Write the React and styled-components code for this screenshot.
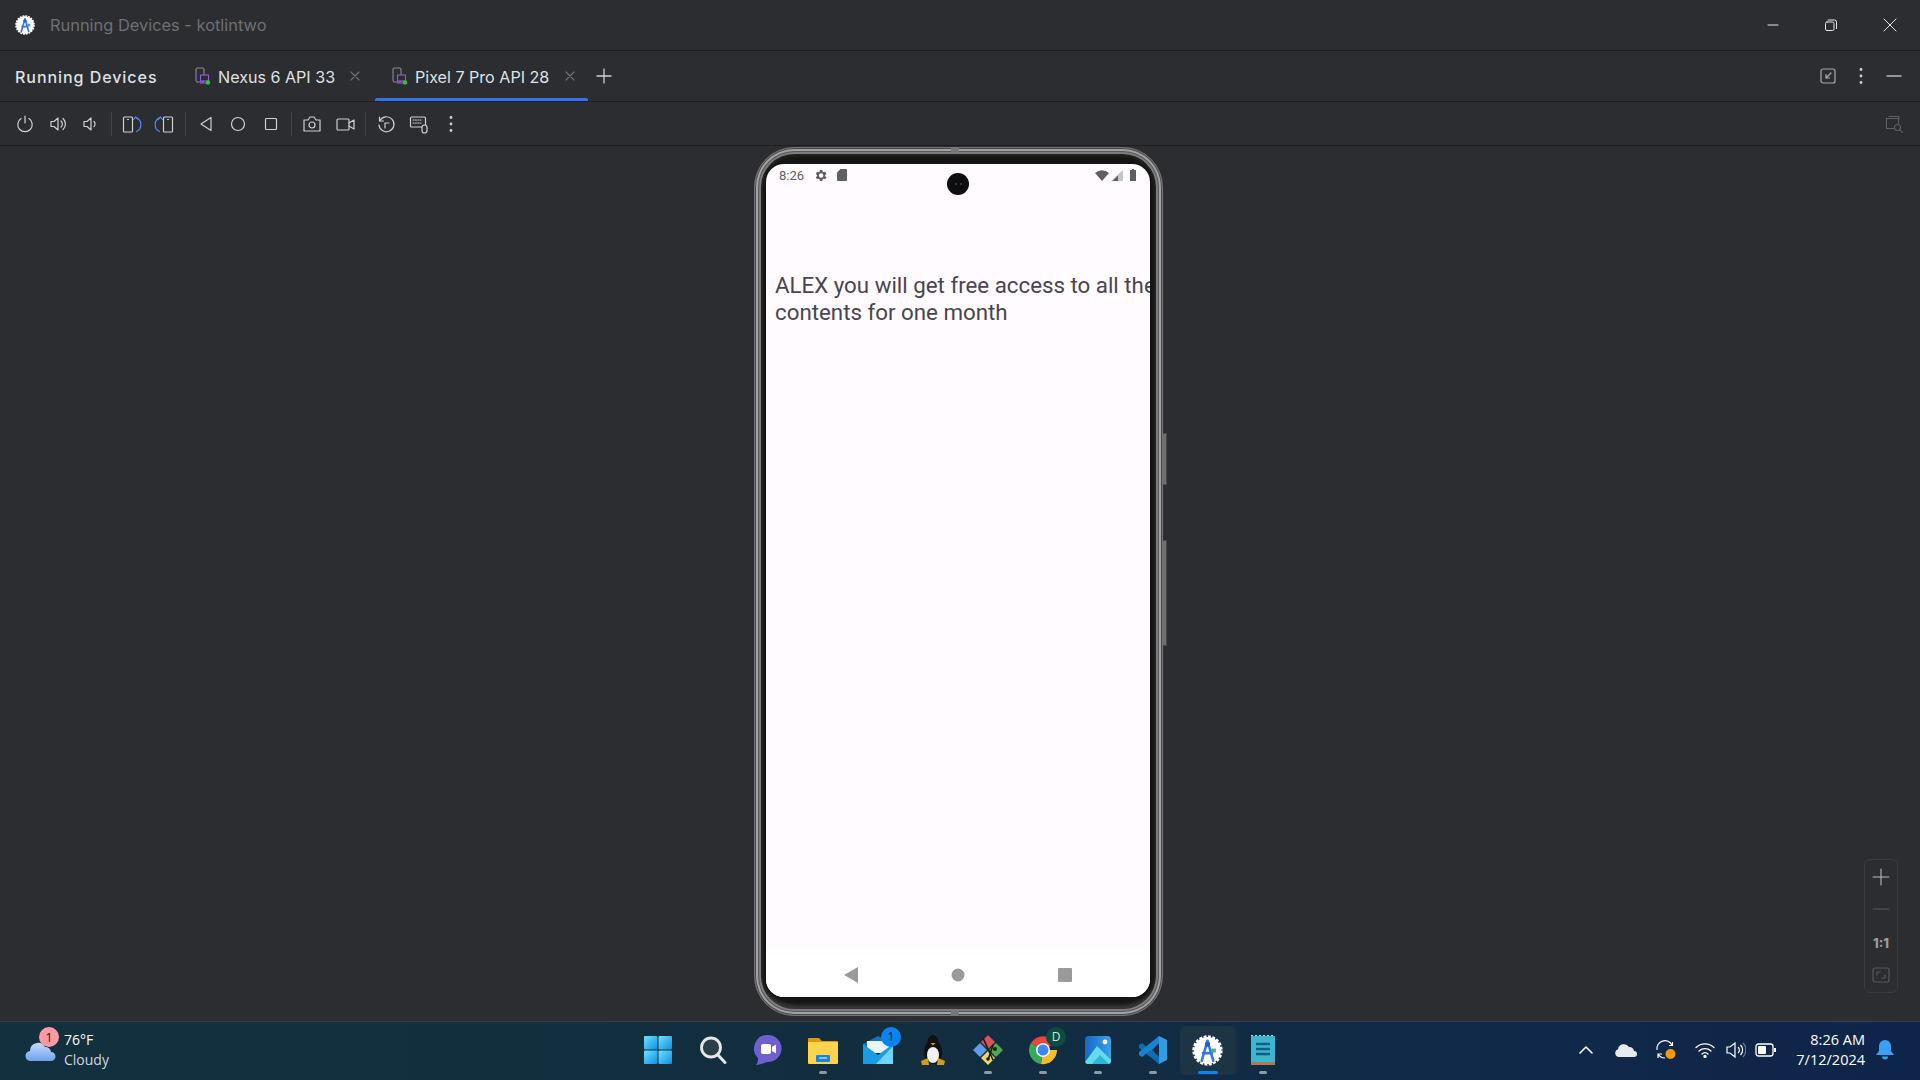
import React from "react";
import styled, { createGlobalStyle } from "styled-components";

const GlobalStyle = createGlobalStyle`
  html, body { margin: 0; padding: 0; background: #2b2d30; overflow: hidden; }
  * { box-sizing: border-box; }
`;

const Window = styled.div`
  width: 1920px;
  height: 1080px;
  display: flex;
  flex-direction: column;
  overflow: hidden;
  background: #2b2d30;
  font-family: Inter, "Liberation Sans", sans-serif;
  color: #dfe1e5;
`;

const TitleBar = styled.div`
  height: 51px;
  flex: none;
  display: flex;
  align-items: center;
  padding-left: 15px;
  border-bottom: 1px solid #1e1f22;
`;

const TitleText = styled.span`
  margin-left: 15px;
  font-size: 16.4px;
  color: #6d7075;
  padding-bottom: 1px;
`;

const WinButtons = styled.div`
  margin-left: auto;
  display: flex;
  align-items: center;
  padding-right: 1px;
`;

const WinButton = styled.div`
  width: 58.5px;
  height: 50px;
  display: flex;
  align-items: center;
  justify-content: center;
`;

const TabRow = styled.div`
  height: 51px;
  flex: none;
  display: flex;
  align-items: center;
  padding-left: 15px;
  border-bottom: 1px solid #1e1f22;
`;

const ToolTitle = styled.span`
  width: 180px;
  padding-top: 1px;
  font-size: 16px;
  font-weight: 500;
  letter-spacing: 0.95px;
  color: #dfe1e5;
`;

const Tab = styled.div`
  position: relative;
  height: 50px;
  display: flex;
  align-items: center;
  padding-left: ${(p) => (p.$active ? "17px" : "0")};
  width: ${(p) => (p.$active ? "213px" : "180px")};
  font-size: 16.1px;
  color: #dfe1e5;
  &::after {
    content: "";
    display: ${(p) => (p.$active ? "block" : "none")};
    position: absolute;
    left: 0;
    right: 0;
    bottom: 0;
    height: 3px;
    border-radius: 2px 2px 0 0;
    background: #3574f0;
  }
`;

const TabLabel = styled.span`
  margin-left: 7px;
  padding-top: 1px;
  white-space: nowrap;
`;

const TabClose = styled.span`
  margin-left: ${(p) => (p.$active ? "15px" : "14px")};
  display: flex;
`;

const RowEnd = styled.div`
  margin-left: auto;
  display: flex;
  align-items: center;
  gap: ${(p) => p.$gap || 13}px;
  padding-right: ${(p) => p.$right ?? 16}px;
`;

const Toolbar = styled.div`
  height: 44px;
  flex: none;
  display: flex;
  align-items: center;
  padding: 0 16px 0 9px;
  border-bottom: 1px solid #1e1f22;
`;

const ToolButton = styled.div`
  width: 32.5px;
  height: 32px;
  display: flex;
  align-items: center;
  justify-content: center;
`;

const ToolSeparator = styled.div`
  width: 1px;
  height: 24px;
  margin: 0 4px;
  background: #43454a;
`;

const Stage = styled.div`
  position: relative;
  flex: 1;
  display: flex;
  justify-content: center;
  padding: 1px 3px 0 0;
  min-height: 0;
`;

const Phone = styled.div`
  position: relative;
  width: 409px;
  height: 869px;
  padding: 16px 12px 18px 11px;
  border-radius: 40px;
  background: #141414;
  border: 1px solid #74757a;
  box-shadow:
    inset 0 0 0 1px #47484b,
    inset 0 0 0 3px #a2a2a2,
    inset 0 0 0 4px #5a5a5a,
    inset 0 0 0 6px #7c7c7c,
    inset 0 0 4px 7px #2e2e2e,
    inset 0 -9px 5px 0 #4a4a4a;
  &::before, &::after {
    content: "";
    position: absolute;
    left: 196px;
    width: 8px;
    height: 4px;
    background: #77787b;
  }
  &::before { top: 0; }
  &::after { bottom: 0; }
`;

const SideKey = styled.div`
  position: absolute;
  right: -5px;
  top: ${(p) => p.$top}px;
  width: 4px;
  height: ${(p) => p.$height}px;
  background: #6f6f6f;
  border: 1px solid #4a4a4a;
  border-left: none;
`;

const Screen = styled.div`
  position: relative;
  height: 100%;
  display: flex;
  flex-direction: column;
  border-radius: 18px;
  overflow: hidden;
  background: #fffbfe;
  font-family: Roboto, sans-serif;
`;

const StatusBar = styled.div`
  height: 22px;
  flex: none;
  display: flex;
  align-items: center;
  padding: 0 11px 0 13px;
  gap: 9px;
  color: #5f5f62;
  font-size: 13px;
`;

const StatusRight = styled.div`
  margin-left: auto;
  display: flex;
  align-items: center;
  gap: 2px;
`;

const Camera = styled.div`
  position: absolute;
  left: 181px;
  top: 9px;
  width: 22px;
  height: 22px;
  border-radius: 50%;
  background: #0e0e10;
  display: flex;
  align-items: center;
  justify-content: center;
  gap: 3px;
  &::before, &::after {
    content: "";
    width: 2px;
    height: 2px;
    border-radius: 50%;
    background: #34465e;
  }
`;

const AppBody = styled.div`
  flex: 1;
  padding: 86px 0 0 9px;
  overflow: hidden;
  font-size: 22.3px;
  line-height: 27px;
  color: #49454f;
  white-space: nowrap;
`;

const NavBar = styled.div`
  height: 45px;
  flex: none;
  display: flex;
  align-items: center;
  justify-content: center;
  gap: 93px;
  background: #fff;
`;

const ZoomPanel = styled.div`
  position: absolute;
  left: 1864px;
  top: 713px;
  width: 34px;
  height: 134px;
  border: 1px solid #393b40;
  border-radius: 6px;
  display: flex;
  flex-direction: column;
  align-items: center;
  padding-top: 1px;
`;

const ZoomItem = styled.div`
  height: 32px;
  margin-top: ${(p) => p.$shift || 0}px;
  display: flex;
  align-items: center;
  justify-content: center;
  font-size: 13px;
  font-weight: 800;
  color: #9a9ca0;
`;

const Taskbar = styled.div`
  position: relative;
  height: 59px;
  flex: none;
  display: flex;
  align-items: center;
  padding-bottom: 2px;
  background: linear-gradient(90deg, #12303e 0%, #122e3e 45%, #10294a 80%, #0f2449 100%);
  border-top: 1px solid #2d4250;
  font-family: "Open Sans", "Noto Sans", sans-serif;
  color: #fff;
`;

const Weather = styled.div`
  position: relative;
  width: 630px;
  padding-left: 25px;
  display: flex;
  align-items: center;
  gap: 7px;
`;

const WeatherBadge = styled.div`
  position: absolute;
  left: 39px;
  top: -3px;
  width: 20px;
  height: 20px;
  border-radius: 50%;
  background: #ff99a4;
  color: #222;
  display: flex;
  align-items: center;
  justify-content: center;
  font-size: 13px;
`;

const WeatherText = styled.div`
  font-size: 14px;
  line-height: 20px;
  display: flex;
  flex-direction: column;
`;

const Muted = styled.span`
  color: #cfd6da;
`;

const Apps = styled.div`
  display: flex;
  align-items: center;
`;

const AppSlot = styled.div`
  position: relative;
  width: 55px;
  height: 49px;
  display: flex;
  align-items: center;
  justify-content: center;
  border-radius: 6px;
  background: ${(p) => (p.$active ? "#1d3444" : "transparent")};
  box-shadow: ${(p) => (p.$active ? "4px 0 0 -1px #1a2f3e" : "none")};
  &::after {
    content: "";
    display: ${(p) => (p.$state ? "block" : "none")};
    position: absolute;
    left: 50%;
    bottom: 1px;
    transform: translateX(-50%);
    width: ${(p) => (p.$state === "active" ? "20px" : "8px")};
    height: 3px;
    border-radius: 2px;
    background: ${(p) => (p.$state === "active" ? "#0a84f0" : "#8b9aa3")};
  }
`;

const AppBadge = styled.div`
  position: absolute;
  right: 4px;
  top: 1px;
  width: 20px;
  height: 20px;
  border-radius: 50%;
  background: ${(p) => p.$bg};
  color: ${(p) => p.$color};
  font-size: 12px;
  display: flex;
  align-items: center;
  justify-content: center;
`;

const Tray = styled.div`
  margin-left: auto;
  display: flex;
  align-items: center;
  padding-right: 17px;
`;

const TrayIcon = styled.div`
  width: ${(p) => p.$width}px;
  display: flex;
  justify-content: center;
`;

const Clock = styled.div`
  width: 80px;
  text-align: right;
  font-size: 14.5px;
  line-height: 20px;
`;

const BellSlot = styled.div`
  width: 38px;
  display: flex;
  justify-content: center;
  padding-left: 2px;
`;

const Line = ({ children, size = 20, color = "#ced0d6", width = 1.2, vb = 20 }) => (
  <svg width={size} height={size} viewBox={`0 0 ${vb} ${vb}`} fill="none" stroke={color} strokeWidth={width} strokeLinecap="round" strokeLinejoin="round">
    {children}
  </svg>
);

const StudioLogo = ({ size = 22 }) => (
  <svg width={size} height={size} viewBox="0 0 24 24">
    <circle cx="12" cy="12" r="10.5" fill="#fff" />
    <circle cx="12" cy="12" r="10.5" fill="none" stroke="#fff" strokeWidth="2.5" strokeDasharray="2.2 1.1" />
    <path d="M12 4.500 L7.500 20 M12 4.500 L16.500 20 M8.500 14 H15.500" stroke="#3574f0" strokeWidth="2" fill="none" strokeLinecap="round" />
    <circle cx="12" cy="7" r="2" fill="#2a5ac8" />
    <rect x="15" y="10.500" width="3.500" height="3" fill="#4caf72" />
  </svg>
);

const DeviceIcon = () => (
  <svg width="16" height="18" viewBox="0 0 16 18" fill="none">
    <rect x="1" y="1" width="8" height="14" rx="1.5" stroke="#868a91" strokeWidth="1.1" />
    <rect x="5.5" y="8" width="8" height="6" fill="#2b2d30" stroke="#955ae0" strokeWidth="1.1" />
    <path d="M5 16h9" stroke="#955ae0" strokeWidth="1.1" />
    <circle cx="13" cy="15.5" r="2.2" fill="#2fc62f" />
  </svg>
);

const CloseX = () => (
  <Line size={12} vb={12} color="#6f737a" width={1.1}>
    <path d="M2 2l8 8M10 2l-8 8" />
  </Line>
);

const Dots = ({ color = "#ced0d6" }) => (
  <svg width="20" height="20" viewBox="0 0 20 20" fill={color}>
    <circle cx="10" cy="3.5" r="1.4" />
    <circle cx="10" cy="10" r="1.4" />
    <circle cx="10" cy="16.5" r="1.4" />
  </svg>
);

const toolIcons = [
  <Line><path d="M6 4.500a7.200 7.200 0 1 0 8 0M10 2v7" /></Line>,
  <Line><path d="M3 7.500h3l4-3.500v12l-4-3.500H3zM13 7a4 4 0 0 1 0 6M15 4.500a7.500 7.500 0 0 1 0 11" /></Line>,
  <Line><path d="M4 7.500h3l4-3.500v12l-4-3.500H4zM14 7.500a3.400 3.400 0 0 1 0 5" /></Line>,
  <Line><rect x="1.500" y="3" width="9" height="15" rx="1" /><path d="M5.500 5.500h1" /><path d="M13.500 3.500a7.500 7.500 0 0 1 1 14" stroke="#548af7" /><path d="M11.500 5.500l2-2.500 2.500 2" stroke="#548af7" /></Line>,
  <Line><rect x="9.500" y="3" width="9" height="15" rx="1" /><path d="M13.500 5.500h1" /><path d="M6.500 3.500a7.500 7.500 0 0 0-1 14" stroke="#548af7" /><path d="M4 5.500l2.500-2.500 2 2.500" stroke="#548af7" /></Line>,
  <Line><path d="M15 3.500v13L5 10z" /></Line>,
  <Line><circle cx="10" cy="10" r="6.500" /></Line>,
  <Line><rect x="4.500" y="4.500" width="11" height="11" rx="1" /></Line>,
  <Line><path d="M2 6h4l2-3h4l2 3h4v11H2z" /><circle cx="10" cy="11" r="3" /></Line>,
  <Line><rect x="2" y="5" width="12" height="11" rx="1" /><path d="M14 9l5-3v9l-5-3" /></Line>,
  <Line><path d="M3.500 3v4h4" /><path d="M3.800 6.800A7.500 7.500 0 1 1 3 11" /><path d="M9 14v-5h4" /></Line>,
  <Line><rect x="1.500" y="3" width="15" height="10" rx="1" /><path d="M4 6h8M4 9h8" strokeDasharray="1 1.400" /><rect x="13" y="11" width="5" height="8" rx="2.500" fill="#2b2d30" /></Line>,
  <Dots />,
];

const Windows = () => (
  <svg width="30" height="30" viewBox="0 0 30 30">
    <defs>
      <linearGradient id="win" x1="0" y1="0" x2="1" y2="1">
        <stop offset="0" stopColor="#6fe3fb" />
        <stop offset="1" stopColor="#0b8fe8" />
      </linearGradient>
    </defs>
    <rect x="1" y="1" width="13.500" height="13.500" rx="1" fill="url(#win)" />
    <rect x="15.500" y="1" width="13.500" height="13.500" rx="1" fill="url(#win)" />
    <rect x="1" y="15.500" width="13.500" height="13.500" rx="1" fill="url(#win)" />
    <rect x="15.500" y="15.500" width="13.500" height="13.500" rx="1" fill="url(#win)" />
  </svg>
);

const Search = () => (
  <svg width="30" height="30" viewBox="0 0 30 30" fill="none">
    <circle cx="13" cy="12.500" r="9.500" stroke="#e4e8ea" strokeWidth="2.800" fill="#2c3f48" />
    <path d="M20 20l7 7.500" stroke="#e4e8ea" strokeWidth="3" strokeLinecap="round" />
  </svg>
);

const Chat = () => (
  <svg width="30" height="32" viewBox="0 0 30 32">
    <path d="M15 1a13.500 13.500 0 0 1 0 27c-3 0-7 3-12 3 2-2 2-5 2-7A13.500 13.500 0 0 1 15 1z" fill="#6e61cf" />
    <rect x="8" y="10" width="10" height="10" rx="2" fill="#fff" />
    <path d="M19 13l4-2.500v9L19 17z" fill="#fff" />
  </svg>
);

const Folder = () => (
  <svg width="30" height="30" viewBox="0 0 30 30">
    <path d="M0 4a1 1 0 0 1 1-1h10l3 3h15a1 1 0 0 1 1 1v5H0z" fill="#d99b0d" />
    <path d="M0 7h30v21a1 1 0 0 1-1 1H1a1 1 0 0 1-1-1z" fill="#fdd44c" />
    <rect x="8" y="20" width="14" height="7" rx="1" fill="#1a84d8" />
    <rect x="11" y="22" width="8" height="2" fill="#7cc4f4" />
  </svg>
);

const Mail = () => (
  <svg width="30" height="30" viewBox="0 0 30 30">
    <path d="M0 9L15 1l15 8v3H0z" fill="#0f74c9" />
    <path d="M4 6h22v12H4z" fill="#eaf6fd" />
    <path d="M0 9l15 11L30 9v20H0z" fill="#1a9be6" />
    <path d="M30 11v18H13z" fill="#6fd4f8" />
  </svg>
);

const Tux = () => (
  <svg width="28" height="32" viewBox="0 0 28 32">
    <ellipse cx="14" cy="18" rx="9" ry="12" fill="#111" />
    <ellipse cx="14" cy="8" rx="5.500" ry="7" fill="#111" />
    <ellipse cx="14" cy="21" rx="6" ry="8" fill="#f1f1f1" />
    <path d="M11.500 9h5l-2.500 2.500z" fill="#e0a10c" />
    <path d="M2 27l7-3 1 7H3zM26 27l-7-3-1 7h7z" fill="#d89c10" />
  </svg>
);

const GitGui = () => (
  <svg width="32" height="32" viewBox="0 0 32 32">
    <path d="M16 1l7 7-7 7-7-7z" fill="#d9534f" />
    <path d="M24 9l7 7-7 7-7-7z" fill="#4fa84a" />
    <path d="M8 9l7 7-7 7-7-7z" fill="#5b9be8" />
    <path d="M16 17l7 7-7 7-7-7z" fill="#f0d560" />
    <path d="M11 4l10 22M21 11l-5 15" stroke="#1a1a1a" strokeWidth="1.600" fill="none" />
    <circle cx="16" cy="25" r="1.800" fill="#1a1a1a" />
    <circle cx="23" cy="15" r="2" fill="#1a1a1a" />
  </svg>
);

const Chrome = () => (
  <svg width="32" height="32" viewBox="0 0 32 32">
    <path d="M16 16L4 9A14 14 0 0 1 28 9z" fill="#e8453c" />
    <path d="M16 16h14a14 14 0 0 1-16 14z" fill="#f9bb2d" />
    <path d="M16 16l-2 14A14 14 0 0 1 4 9z" fill="#3ba758" />
    <circle cx="16" cy="16" r="7" fill="#fff" />
    <circle cx="16" cy="16" r="5.500" fill="#3f86f4" />
  </svg>
);

const Photos = () => (
  <svg width="28" height="30" viewBox="0 0 28 30">
    <defs>
      <linearGradient id="pho" x1="0" y1="0" x2="1" y2="0">
        <stop offset="0" stopColor="#1668c8" />
        <stop offset="1" stopColor="#3aa0e8" />
      </linearGradient>
    </defs>
    <rect x="1" y="1" width="26" height="28" rx="4" fill="url(#pho)" />
    <path d="M1 27L13 11l14 14v1a3 3 0 0 1-3 3H4a3 3 0 0 1-3-2z" fill="#62dcea" />
    <path d="M8 29l8-9 9 9z" fill="#2bb5d8" />
    <circle cx="21" cy="7" r="2.400" fill="#f4f4f4" />
  </svg>
);

const VsCode = () => (
  <svg width="32" height="32" viewBox="0 0 32 32">
    <path d="M22 2l8 4v20l-8 4z" fill="#2d9de8" />
    <path d="M22 2L9 16l13 14 0-7-7-7 7-7z" fill="#1b82cf" />
    <path d="M2 11l3-2 17 14v7L2 14z" fill="#0f6cb0" />
    <path d="M2 21l3 2 17-14V2L2 18z" fill="#1b82cf" />
  </svg>
);

const Notepad = () => (
  <svg width="26" height="32" viewBox="0 0 26 32">
    <rect x="1" y="2" width="24" height="28" fill="#3db5cf" />
    <rect x="1" y="28" width="24" height="3" fill="#b07a4e" />
    <path d="M2 2v-1M6 2v-1M10 2v-1M14 2v-1M18 2v-1M22 2v-1" stroke="#9fdde8" strokeWidth="2" />
    <path d="M6 10h14M6 15h14M6 20h14" stroke="#0d5f80" strokeWidth="2.400" />
  </svg>
);

const apps = [
  { icon: <Windows /> },
  { icon: <Search /> },
  { icon: <Chat /> },
  { icon: <Folder />, state: "open" },
  { icon: <Mail />, badge: "1", bg: "#0a84f0", color: "#06223b" },
  { icon: <Tux /> },
  { icon: <GitGui />, state: "open" },
  { icon: <Chrome />, state: "open", badge: "D", bg: "#0d4d3f", color: "#d6e6df" },
  { icon: <Photos />, state: "open" },
  { icon: <VsCode />, state: "open" },
  { icon: <StudioLogo size={31} />, state: "active", active: true },
  { icon: <Notepad />, state: "open" },
];

export default function App() {
  return (
    <Window>
      <GlobalStyle />
      <TitleBar>
        <StudioLogo size={20} />
        <TitleText>Running Devices - kotlintwo</TitleText>
        <WinButtons>
          <WinButton>
            <Line size={14} vb={14} color="#e6e6e6" width={1}><path d="M2 7h10" /></Line>
          </WinButton>
          <WinButton>
            <Line size={14} vb={14} color="#e6e6e6" width={1}><rect x="1.500" y="4" width="8.500" height="8.500" rx="1.500" /><path d="M4 2h6.500A2 2 0 0 1 12.500 4v6.500" /></Line>
          </WinButton>
          <WinButton>
            <Line size={14} vb={14} color="#e6e6e6" width={1}><path d="M1 1l12 12M13 1L1 13" /></Line>
          </WinButton>
        </WinButtons>
      </TitleBar>

      <TabRow>
        <ToolTitle>Running Devices</ToolTitle>
        <Tab>
          <DeviceIcon />
          <TabLabel>Nexus 6 API 33</TabLabel>
          <TabClose><CloseX /></TabClose>
        </Tab>
        <Tab $active>
          <DeviceIcon />
          <TabLabel>Pixel 7 Pro API 28</TabLabel>
          <TabClose $active><CloseX /></TabClose>
        </Tab>
        <ToolButton>
          <Line size={18} vb={18} color="#ced0d6" width={1.3}><path d="M9 2v14M2 9h14" /></Line>
        </ToolButton>
        <RowEnd $gap={14} $right={17}>
          <Line size={18} vb={18} color="#a8abb0" width={1.2}>
            <rect x="2" y="2" width="14" height="14" rx="2" />
            <path d="M12 6l-5 5M7 7.500V11h3.500" />
          </Line>
          <Dots />
          <Line size={18} vb={18} color="#b4b6ba" width={1.4}><path d="M2 9h14" /></Line>
        </RowEnd>
      </TabRow>

      <Toolbar>
        {toolIcons.map((icon, i) => (
          <React.Fragment key={i}>
            <ToolButton>{icon}</ToolButton>
            {[2, 4, 7, 9].includes(i) && <ToolSeparator />}
          </React.Fragment>
        ))}
        <RowEnd $right={0}>
          <Line color="#5c5f64" width={1.1}>
            <path d="M5 2.500h10v2" />
            <rect x="2.500" y="4.500" width="12" height="10" />
            <circle cx="13.500" cy="13.500" r="3" fill="#2b2d30" />
            <path d="M15.800 15.800l2.500 2.500" />
          </Line>
        </RowEnd>
      </Toolbar>

      <Stage>
        <Phone>
          <SideKey $top={285} $height={52} />
          <SideKey $top={392} $height={106} />
          <Screen>
            <StatusBar>
              <span>8:26</span>
              <svg width="15" height="15" viewBox="0 0 24 24" fill="#5f5f62">
                <path d="M19.400 13a7.600 7.600 0 0 0 0-2l2.100-1.600-2-3.500-2.500 1a7.600 7.600 0 0 0-1.700-1L15 3.200h-4l-.4 2.700a7.600 7.600 0 0 0-1.700 1l-2.500-1-2 3.500L6.500 11a7.600 7.600 0 0 0 0 2l-2.100 1.600 2 3.500 2.500-1a7.600 7.600 0 0 0 1.700 1l.4 2.700h4l.4-2.700a7.600 7.600 0 0 0 1.700-1l2.500 1 2-3.500zM13 15.500a3.500 3.500 0 1 1 0-7 3.500 3.500 0 0 1 0 7z" />
              </svg>
              <svg width="10" height="12" viewBox="0 0 10 12" fill="#5f5f62">
                <path d="M3.500 0H9a1 1 0 0 1 1 1v10a1 1 0 0 1-1 1H1a1 1 0 0 1-1-1V3.500z" />
              </svg>
              <StatusRight>
                <svg width="14" height="11" viewBox="0 0 14 11" fill="#5f5f62"><path d="M0 3a10.500 10.500 0 0 1 14 0L7 11z" /></svg>
                <svg width="12" height="11" viewBox="0 0 12 11"><path d="M12 0v11H0z" fill="#c4c4c4" /><path d="M7 5.500V11H1.500z" fill="#5f5f62" /></svg>
                <svg width="10" height="12" viewBox="0 0 10 12" fill="#5f5f62" style={{ marginLeft: 4 }}><path d="M3 0h2v1h2v11H1V1h2z" /></svg>
              </StatusRight>
            </StatusBar>
            <Camera />
            <AppBody>
              ALEX you will get free access to all the
              <br />
              contents for one month
            </AppBody>
            <NavBar>
              <svg width="14" height="16" viewBox="0 0 14 16" fill="#9a9a9a"><path d="M14 0v16L0 8z" /></svg>
              <svg width="14" height="14" viewBox="0 0 14 14" fill="#9a9a9a"><circle cx="7" cy="7" r="6.500" /></svg>
              <svg width="14" height="14" viewBox="0 0 14 14" fill="#9a9a9a"><rect width="14" height="14" rx="1" /></svg>
            </NavBar>
          </Screen>
        </Phone>
        <ZoomPanel>
          <ZoomItem>
            <Line size={18} vb={18} color="#b8babe" width={1.1}><path d="M9 1v16M1 9h16" /></Line>
          </ZoomItem>
          <ZoomItem>
            <Line size={18} vb={18} color="#55585c" width={1.1}><path d="M1 9h16" /></Line>
          </ZoomItem>
          <ZoomItem $shift={2}>1:1</ZoomItem>
          <ZoomItem>
            <Line size={18} vb={18} color="#55585c" width={1.2}>
              <rect x="1" y="2" width="16" height="14" rx="2" />
              <path d="M5 9V6h3M13 9v3h-3" />
            </Line>
          </ZoomItem>
        </ZoomPanel>
      </Stage>

      <Taskbar>
        <Weather>
          <svg width="32" height="24" viewBox="0 0 32 24">
            <defs>
              <linearGradient id="cloud" x1="0" y1="0" x2="0" y2="1">
                <stop offset="0" stopColor="#c4dcfb" />
                <stop offset="1" stopColor="#6fa2ee" />
              </linearGradient>
            </defs>
            <path d="M6 23a5 5 0 0 1-1-10 8 8 0 0 1 15-4 6 6 0 0 1 6 5 4.500 4.500 0 0 1 0 9z" fill="url(#cloud)" />
          </svg>
          <WeatherBadge>1</WeatherBadge>
          <WeatherText>
            <span>76°F</span>
            <Muted>Cloudy</Muted>
          </WeatherText>
        </Weather>
        <Apps>
          {apps.map((app, i) => (
            <AppSlot key={i} $state={app.state} $active={app.active}>
              {app.icon}
              {app.badge && <AppBadge $bg={app.bg} $color={app.color}>{app.badge}</AppBadge>}
            </AppSlot>
          ))}
        </Apps>
        <Tray>
          <TrayIcon $width={38}>
            <Line size={16} vb={16} color="#fff" width={1.6}><path d="M2 11l6-6 6 6" /></Line>
          </TrayIcon>
          <TrayIcon $width={42}>
            <svg width="22" height="14" viewBox="0 0 22 14"><path d="M4 14a4 4 0 0 1-1-7.800A6 6 0 0 1 14 4a4.500 4.500 0 0 1 5 4 3 3 0 0 1 0 6z" fill="#e8eaed" /></svg>
          </TrayIcon>
          <TrayIcon $width={38}>
            <svg width="22" height="22" viewBox="0 0 22 22" fill="none" stroke="#fff" strokeWidth="1.2">
              <path d="M2 11A8 8 0 0 1 17 6M14 6.500h3.500V3" />
              <path d="M3 19v-4h4M3 15a8 8 0 0 0 7 4" />
              <circle cx="15.500" cy="15" r="5" fill="#f59a0c" stroke="none" />
            </svg>
          </TrayIcon>
          <TrayIcon $width={40}>
            <svg width="20" height="16" viewBox="0 0 20 16" fill="none" stroke="#fff" strokeWidth="1.3" strokeLinecap="round">
              <path d="M1 5.500a13 13 0 0 1 18 0M4 9a9 9 0 0 1 12 0M7 12a4 4 0 0 1 6 0" />
              <circle cx="10" cy="14.500" r="1" fill="#fff" />
            </svg>
          </TrayIcon>
          <TrayIcon $width={22}>
            <svg width="20" height="18" viewBox="0 0 20 18" fill="none" stroke="#fff" strokeWidth="1.2">
              <path d="M1 6h3l5-4v14l-5-4H1z" />
              <path d="M12 6a4 4 0 0 1 0 6M14.500 4a7 7 0 0 1 0 10" />
              <path d="M17 2a10 10 0 0 1 0 14" stroke="#6a7a92" />
            </svg>
          </TrayIcon>
          <TrayIcon $width={38}>
            <svg width="22" height="14" viewBox="0 0 22 14">
              <rect x="1" y="1" width="17" height="12" rx="2.500" fill="none" stroke="#fff" strokeWidth="1.3" />
              <rect x="3" y="3" width="8" height="8" rx="1" fill="#fff" />
              <rect x="19" y="5" width="2" height="4" fill="#fff" />
            </svg>
          </TrayIcon>
          <Clock>
            <div>8:26 AM</div>
            <div>7/12/2024</div>
          </Clock>
          <BellSlot>
            <svg width="18" height="20" viewBox="0 0 18 20" fill="#3aa0f5">
              <path d="M9 0a6 6 0 0 1 6 6v5l3 4H0l3-4V6a6 6 0 0 1 6-6zM6 16.500h6a3 3 0 0 1-6 0z" />
            </svg>
          </BellSlot>
        </Tray>
      </Taskbar>
    </Window>
  );
}
